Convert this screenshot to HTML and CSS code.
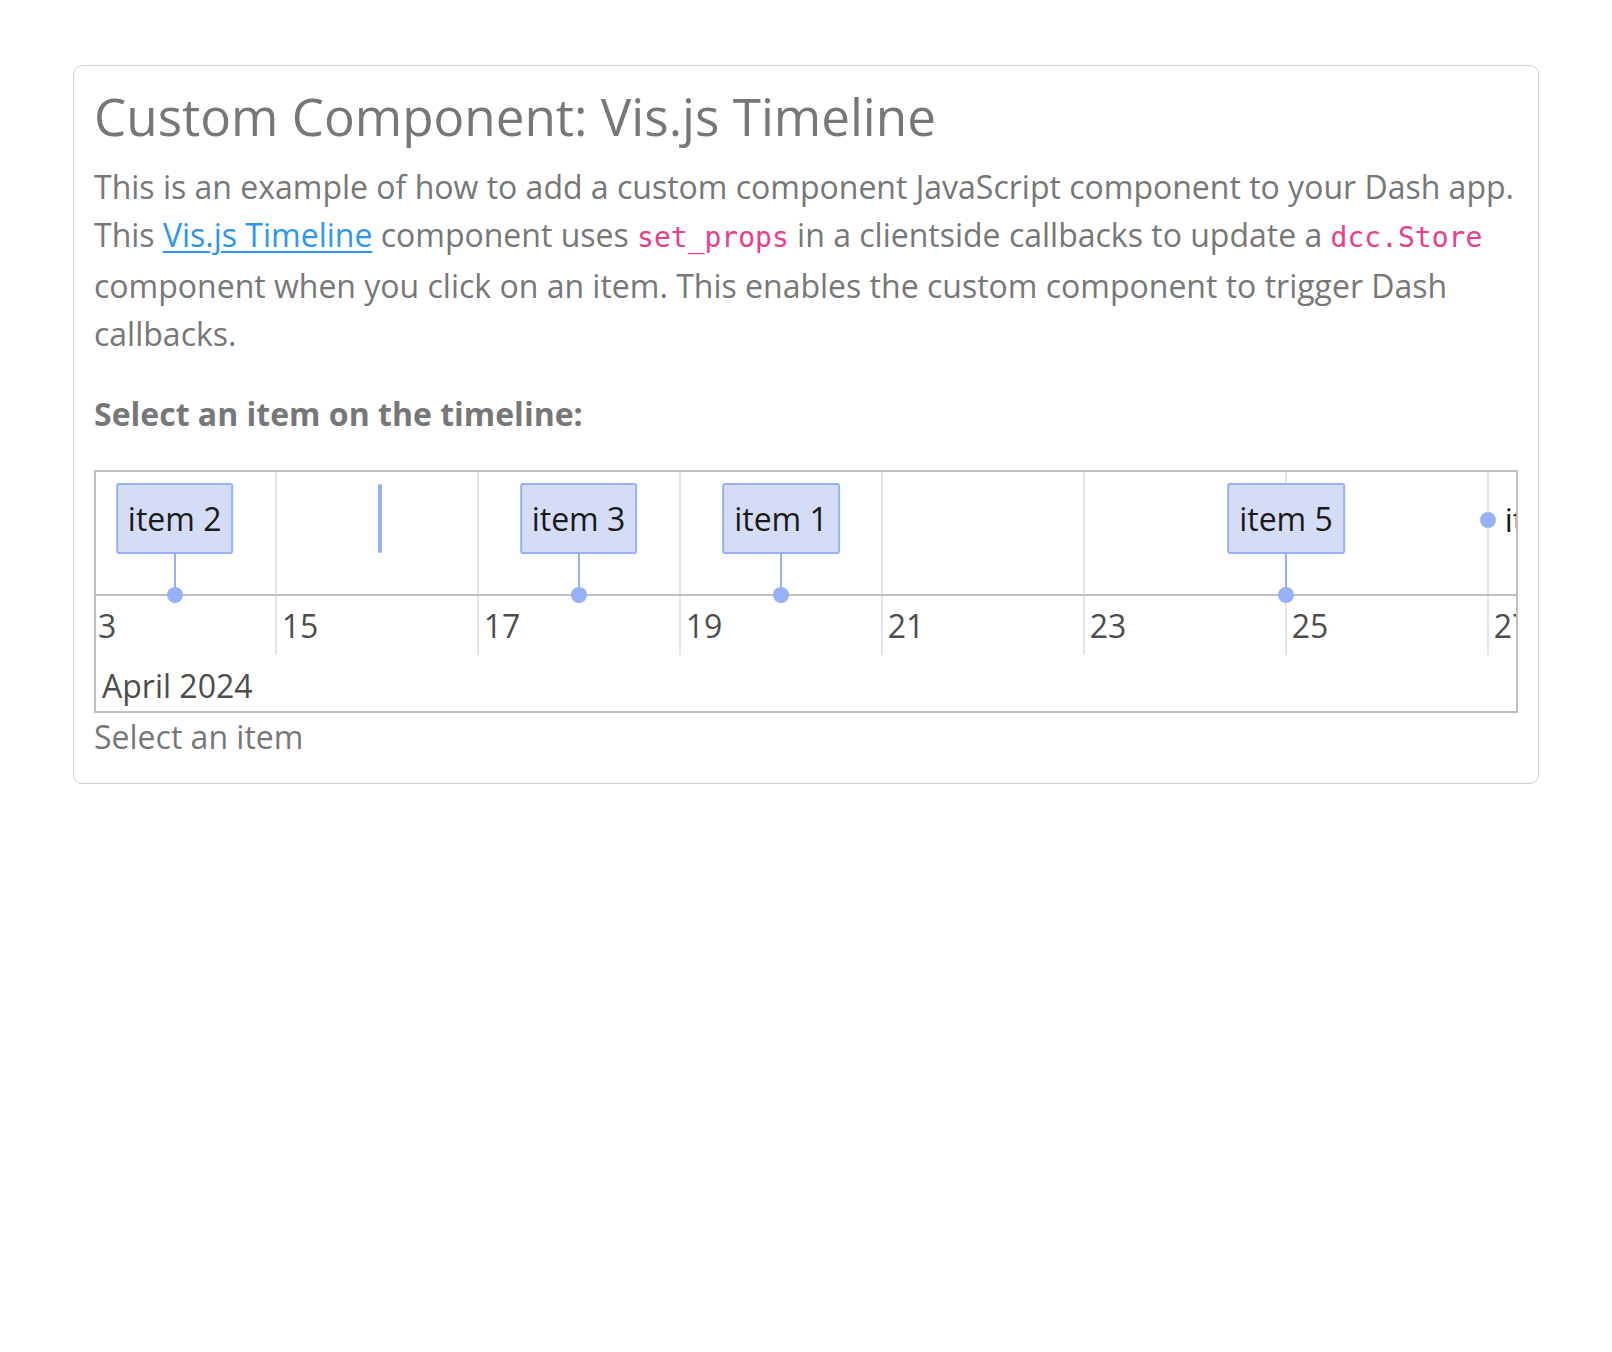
FILE: index.html
```html
<!DOCTYPE html>
<html lang="en">
<head>
<meta charset="utf-8">
<title>Custom Component: Vis.js Timeline</title>
<link rel="stylesheet" href="styles.css">
</head>
<body>
<div class="card">
  <h1 class="title">Custom Component: Vis.js Timeline</h1>
  <p class="intro">This is an example of how to add a custom component JavaScript component to your Dash app. This <a href="#" class="link">Vis.js Timeline</a> component uses <code class="code">set_props</code> in a clientside callbacks to update a <code class="code">dcc.Store</code> component when you click on an item. This enables the custom component to trigger Dash callbacks.</p>
  <p class="label">Select an item on the timeline:</p>
  <div class="timeline">
    <div class="tl-body">
      <div class="grid" style="left:178.7px"></div>
      <div class="grid" style="left:380.7px"></div>
      <div class="grid" style="left:582.7px"></div>
      <div class="grid" style="left:784.7px"></div>
      <div class="grid" style="left:986.7px"></div>
      <div class="grid" style="left:1188.7px"></div>
      <div class="grid" style="left:1390.7px"></div>
      <div class="tl-items">
        <div class="item" style="left:78.7px"><div class="box">item 2</div><div class="stem"></div><div class="dot"></div></div>
        <div class="range" style="left:281.5px"></div>
        <div class="item" style="left:482.5px"><div class="box">item 3</div><div class="stem"></div><div class="dot"></div></div>
        <div class="item" style="left:685px"><div class="box">item 1</div><div class="stem"></div><div class="dot"></div></div>
        <div class="item" style="left:1190px"><div class="box">item 5</div><div class="stem"></div><div class="dot"></div></div>
        <div class="point" style="left:1383.7px"><span class="pdot"></span><span class="ptext">item 6</span></div>
      </div>
      <div class="tl-minor">
        <span class="minor" style="left:-16.3px">13</span>
        <span class="minor" style="left:185.7px">15</span>
        <span class="minor" style="left:387.7px">17</span>
        <span class="minor" style="left:589.7px">19</span>
        <span class="minor" style="left:791.7px">21</span>
        <span class="minor" style="left:993.7px">23</span>
        <span class="minor" style="left:1195.7px">25</span>
        <span class="minor" style="left:1397.7px">27</span>
      </div>
      <div class="tl-major">April 2024</div>
    </div>
  </div>
  <div class="output">Select an item</div>
</div>
</body>
</html>
```

FILE: styles.css
```css
html, body {
  margin: 0;
  padding: 0;
  background: #ffffff;
}
body {
  font-family: "Open Sans", "Noto Sans", sans-serif;
  font-size: 32px;
  line-height: 48px;
  color: #777777;
}
.card {
  box-sizing: border-box;
  width: 1466px;
  margin: 65px 0 0 73px;
  border: 1px solid #d0d0d0;
  border-radius: 9px;
  padding: 20px 20px 22px 20px;
}
.title {
  margin: 0 0 16px 0;
  font-size: 51.2px;
  line-height: 61.4px;
  font-weight: 400;
  color: #777777;
}
.intro {
  margin: 0 0 32px 0;
}
.link {
  color: #2f96f0;
  text-decoration: underline;
  text-decoration-thickness: 2px;
  text-underline-offset: 4px;
}
.code {
  font-family: "DejaVu Sans Mono", "Liberation Mono", monospace;
  font-size: 28px;
  color: #e83e8c;
}
.label {
  margin: 0 0 32px 0;
  font-weight: 700;
}
.timeline {
  border: 2px solid #bfbfbf;
  overflow: hidden;
  position: relative;
  color: #4d4d4d;
}
.tl-body {
  position: relative;
}
.grid {
  position: absolute;
  top: 0;
  width: 2px;
  height: 183px;
  background: #e5e5e5;
}
.tl-items {
  position: relative;
  height: 122px;
  border-bottom: 2px solid #bfbfbf;
}
.item {
  position: absolute;
  top: 0;
  width: 0;
}
.box {
  position: absolute;
  top: 11px;
  left: 0;
  transform: translateX(-50%);
  white-space: nowrap;
  box-sizing: border-box;
  height: 71px;
  padding: 9.5px 10px;
  border: 2px solid #97b0f8;
  border-radius: 3px;
  background: #d5ddf6;
  color: #1a1a1a;
}
.stem {
  position: absolute;
  top: 82px;
  left: -1px;
  width: 2px;
  height: 41px;
  background: #97b0f8;
}
.dot {
  position: absolute;
  top: 115px;
  left: -8px;
  width: 16px;
  height: 16px;
  border-radius: 50%;
  background: #97b0f8;
}
.range {
  position: absolute;
  top: 12px;
  width: 4px;
  height: 69px;
  border-radius: 2px;
  background: #97b0f8;
}
.point {
  position: absolute;
  top: 24px;
  display: flex;
  align-items: center;
  white-space: nowrap;
  color: #1a1a1a;
}
.pdot {
  width: 16px;
  height: 16px;
  border-radius: 50%;
  background: #97b0f8;
  margin-right: 9px;
}
.tl-minor {
  position: relative;
  height: 59px;
}
.minor {
  position: absolute;
  top: 6px;
  white-space: nowrap;
}
.tl-major {
  position: relative;
  padding: 7px 0 0 6px;
  height: 49px;
}
.output {
  margin: 0;
}
```
